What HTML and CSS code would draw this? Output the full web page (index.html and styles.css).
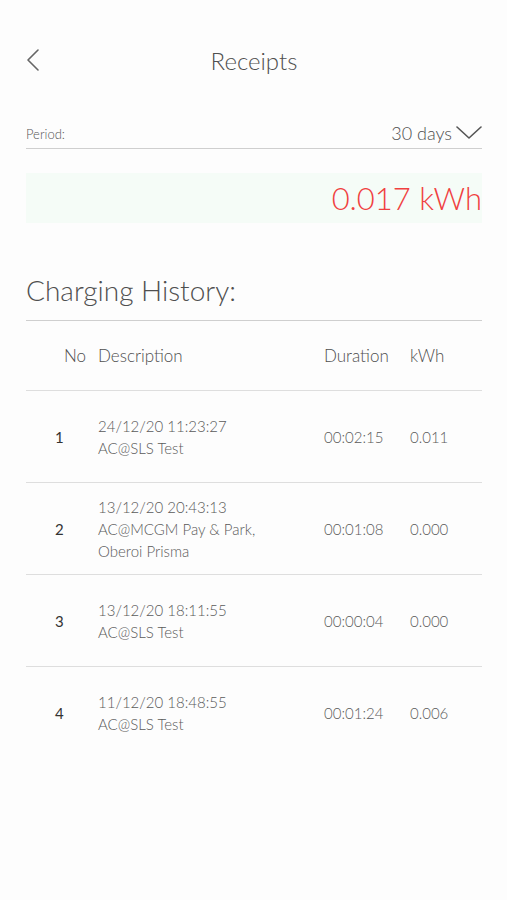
FILE: index.html
```html
<!DOCTYPE html>
<html lang="en">
<head>
    <meta charset="UTF-8">
    <meta name="viewport" content="width=device-width, initial-scale=1.0">
    <title>Receipts</title>
    <link rel="stylesheet" href="styles.css">
</head>
<body>
    <div class="screen">
        <div class="topbar">
            <button class="back" aria-label="Back">
                <svg width="14" height="22" viewBox="0 0 14 22">
                    <polyline points="12,1 2,11 12,21" fill="none" stroke="#666" stroke-width="1.6" stroke-linecap="round" stroke-linejoin="round"/>
                </svg>
            </button>
            <h1>Receipts</h1>
        </div>

        <div class="period">
            <span class="period-label">Period:</span>
            <span class="period-value">30 days
                <svg width="26" height="14" viewBox="0 0 26 14">
                    <polyline points="1,1 13,12 25,1" fill="none" stroke="#555" stroke-width="1.6" stroke-linecap="round" stroke-linejoin="round"/>
                </svg>
            </span>
        </div>

        <div class="total">0.017 kWh</div>

        <h2>Charging History:</h2>

        <div class="history">
            <div class="row head">
                <div class="no">No</div>
                <div>Description</div>
                <div>Duration</div>
                <div>kWh</div>
            </div>
            <div class="row">
                <div class="no">1</div>
                <div>24/12/20 11:23:27<br>AC@SLS Test</div>
                <div>00:02:15</div>
                <div>0.011</div>
            </div>
            <div class="row">
                <div class="no">2</div>
                <div>13/12/20 20:43:13<br>AC@MCGM Pay &amp; Park,<br>Oberoi Prisma</div>
                <div>00:01:08</div>
                <div>0.000</div>
            </div>
            <div class="row">
                <div class="no">3</div>
                <div>13/12/20 18:11:55<br>AC@SLS Test</div>
                <div>00:00:04</div>
                <div>0.000</div>
            </div>
            <div class="row last">
                <div class="no">4</div>
                <div>11/12/20 18:48:55<br>AC@SLS Test</div>
                <div>00:01:24</div>
                <div>0.006</div>
            </div>
        </div>
    </div>
</body>
</html>
```

FILE: styles.css
```css
body {
    margin: 0;
    background: #fdfdfd;
    font-family: Lato, "Open Sans", sans-serif;
    font-weight: 300;
    color: #555;
}

.screen {
    padding: 0 25px 0 26px;
}

.topbar {
    position: relative;
    height: 122px;
    display: flex;
    align-items: flex-start;
    justify-content: center;
}

.topbar h1 {
    margin: 46px 0 0;
    font-size: 24px;
    font-weight: 300;
    color: #4f4f4f;
}

.back {
    position: absolute;
    left: 0;
    top: 49px;
    padding: 0;
    border: none;
    background: none;
}

.period {
    display: flex;
    justify-content: space-between;
    align-items: flex-end;
    padding-bottom: 4px;
    border-bottom: 1px solid #cfcfcf;
}

.period-label {
    font-size: 13px;
    color: #555;
    padding-bottom: 2px;
}

.period-value {
    display: flex;
    align-items: center;
    gap: 4px;
    font-size: 18px;
    color: #4f4f4f;
}

.total {
    margin-top: 24px;
    height: 50px;
    background: #f5fcf7;
    color: #f04040;
    font-size: 31px;
    font-weight: 300;
    text-align: right;
    line-height: 50px;
}

h2 {
    margin: 50px 0 0;
    font-size: 28px;
    font-weight: 300;
    color: #4f4f4f;
    padding-bottom: 13px;
    border-bottom: 1px solid #cfcfcf;
}

.row {
    display: grid;
    grid-template-columns: 72px 226px 86px 72px;
    align-items: center;
    height: 91px;
    border-bottom: 1px solid #dedede;
    font-size: 15px;
    line-height: 22px;
    color: #5a5a5a;
}

.row.head {
    height: 69px;
    font-size: 17px;
    color: #4f4f4f;
}

.row.last {
    border-bottom: none;
}

.row .no {
    padding-left: 29px;
    color: #333;
    font-weight: 400;
}

.row.head .no {
    padding-left: 38px;
    color: #4f4f4f;
    font-weight: 300;
}
```
